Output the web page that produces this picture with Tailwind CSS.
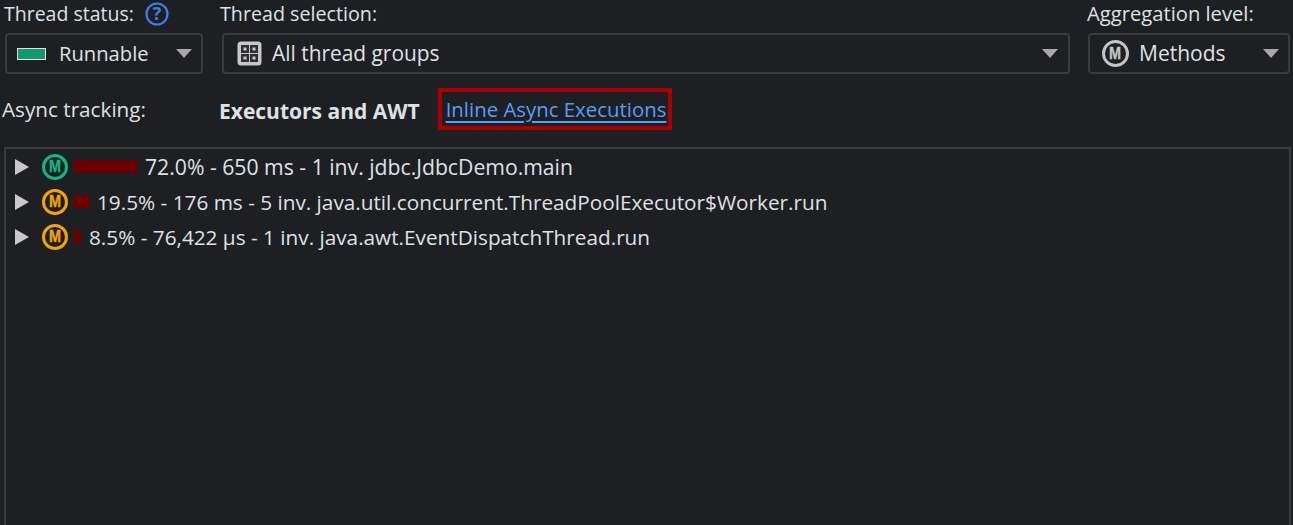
<!DOCTYPE html>
<html lang="en">
<head>
  <meta charset="UTF-8" />
  <title>Call tree</title>
  <script src="https://cdn.jsdelivr.net/npm/@tailwindcss/browser@4"></script>
</head>
<body class="bg-[#1e1f22] text-[#dfe1e5] font-['Open_Sans','Noto_Sans',sans-serif] text-[20px] h-[525px] w-[1293px] overflow-hidden">
  <!-- selectors -->
  <div class="flex pl-[5px] pr-[3px] gap-[18px]">
    <div class="w-[198px] mr-[1px]">
      <div class="h-[33px] flex items-center -ml-[1px] leading-none pb-[6px]">
        <span class="text-[19.5px]">Thread status:</span>
        <svg width="24" height="24" viewBox="0 0 24 24" class="ml-[11px] mt-[1px]"><circle cx="12" cy="12" r="10.5" fill="none" stroke="#3b80ea" stroke-width="2.2"/><text x="12" y="18" text-anchor="middle" font-size="18" font-weight="700" fill="#3b80ea">?</text></svg>
      </div>
      <div class="h-[41px] border-2 border-[#393b40] rounded-[4px] flex items-center pl-[10px] pr-[9px]">
        <span class="w-[29px] h-[12px] bg-[#12996b] border border-[#dfe1e5]"></span>
        <span class="ml-[13px] flex-1 text-[20.2px]">Runnable</span>
        <span class="w-0 h-0 border-x-[8px] border-x-transparent border-t-[9px] border-t-[#a8a8a8]"></span>
      </div>
    </div>
    <div class="flex-1">
      <div class="h-[33px] flex items-center -ml-[2px] leading-none pb-[6px] text-[19.7px]">Thread selection:</div>
      <div class="h-[41px] border-2 border-[#393b40] rounded-[4px] flex items-center pl-[13px] pr-[10px]">
        <svg width="25" height="25" viewBox="0 0 25 25"><rect x="0.5" y="0.5" width="24" height="24" rx="3.5" fill="#c8c8c8"/><rect x="4" y="4" width="8" height="8" fill="#2e2f32"/><rect x="13" y="4" width="8" height="8" fill="#2e2f32"/><rect x="4" y="13" width="8" height="8" fill="#2e2f32"/><rect x="13" y="13" width="8" height="8" fill="#2e2f32"/><rect x="6.5" y="6.5" width="3" height="3" fill="#c8c8c8"/><rect x="15.5" y="6.5" width="3" height="3" fill="#c8c8c8"/><rect x="6.5" y="15.5" width="3" height="3" fill="#c8c8c8"/><rect x="15.5" y="15.5" width="3" height="3" fill="#c8c8c8"/></svg>
        <span class="ml-[10px] flex-1 text-[20.9px]">All thread groups</span>
        <span class="w-0 h-0 border-x-[8px] border-x-transparent border-t-[9px] border-t-[#a8a8a8]"></span>
      </div>
    </div>
    <div class="w-[202px]">
      <div class="h-[33px] flex items-center -ml-[1px] leading-none pb-[6px] text-[20.2px]">Aggregation level:</div>
      <div class="h-[41px] border-2 border-[#393b40] rounded-[4px] flex items-center pl-[12px] pr-[9px]">
        <span class="w-[27px] h-[27px] rounded-full border-[3px] border-[#c4c4c4] text-[#c4c4c4] font-['Liberation_Sans'] font-bold text-[17px] flex items-center justify-center [-webkit-text-stroke:0.4px]"><span class="scale-x-[0.85]">M</span></span>
        <span class="ml-[10px] flex-1 text-[21px]">Methods</span>
        <span class="w-0 h-0 border-x-[8px] border-x-transparent border-t-[9px] border-t-[#a8a8a8]"></span>
      </div>
    </div>
  </div>

  <!-- async tracking -->
  <div class="flex items-center h-[46px] mt-[12px] pl-[2px]">
    <span class="w-[217px] mt-[2px] text-[20.7px]">Async tracking:</span>
    <span class="font-bold text-[21px] mt-[6px]">Executors and AWT</span>
    <span class="ml-[18px] border-[4px] border-[#a60000] h-[42px] pl-[4px] pr-[2px] flex items-center text-[#589df6] underline underline-offset-[4px] text-[20.4px]">Inline Async Executions</span>
  </div>

  <!-- call tree -->
  <div class="mt-[15px] ml-[4px] mr-[2px] h-[400px] border-2 border-[#393b40] pl-[9px]">
    <div class="flex items-center h-[35px]">
      <span class="w-0 h-0 border-y-[8px] border-y-transparent border-l-[14px] border-l-[#c8c8c8]"></span>
      <span class="ml-[13px] w-[26px] h-[26px] rounded-full border-[3px] border-[#12b584] text-[#12b584] font-['Liberation_Sans'] font-bold text-[17px] flex items-center justify-center [-webkit-text-stroke:0.4px]"><span class="scale-x-[0.85]">M</span></span>
      <span class="ml-[6px] w-[63px] h-[13px] bg-[#6b0000]"></span>
      <span class="ml-[8px] text-[21.2px]">72.0% - 650 ms - 1 inv. jdbc.JdbcDemo.main</span>
    </div>
    <div class="flex items-center h-[35px]">
      <span class="w-0 h-0 border-y-[8px] border-y-transparent border-l-[14px] border-l-[#c8c8c8]"></span>
      <span class="ml-[13px] w-[26px] h-[26px] rounded-full border-[3px] border-[#f2a20c] text-[#f2a20c] font-['Liberation_Sans'] font-bold text-[17px] flex items-center justify-center [-webkit-text-stroke:0.4px]"><span class="scale-x-[0.85]">M</span></span>
      <span class="ml-[6px] w-[16px] h-[13px] bg-[#6b0000]"></span>
      <span class="ml-[7px] mt-[2px] text-[20.75px]">19.5% - 176 ms - 5 inv. java.util.concurrent.ThreadPoolExecutor$Worker.run</span>
    </div>
    <div class="flex items-center h-[35px]">
      <span class="w-0 h-0 border-y-[8px] border-y-transparent border-l-[14px] border-l-[#c8c8c8]"></span>
      <span class="ml-[13px] w-[26px] h-[26px] rounded-full border-[3px] border-[#f2a20c] text-[#f2a20c] font-['Liberation_Sans'] font-bold text-[17px] flex items-center justify-center [-webkit-text-stroke:0.4px]"><span class="scale-x-[0.85]">M</span></span>
      <span class="ml-[6px] w-[7px] h-[13px] bg-[#6b0000]"></span>
      <span class="ml-[8px] mt-[2px] text-[20.75px]">8.5% - 76,422 µs - 1 inv. java.awt.EventDispatchThread.run</span>
    </div>
  </div>
</body>
</html>
